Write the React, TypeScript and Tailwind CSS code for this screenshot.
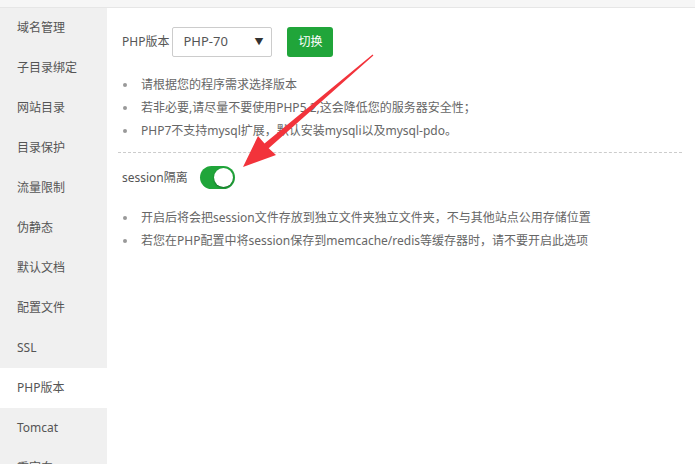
import React from "react";

const menu = [
  "域名管理",
  "子目录绑定",
  "网站目录",
  "目录保护",
  "流量限制",
  "伪静态",
  "默认文档",
  "配置文件",
  "SSL",
  "PHP版本",
  "Tomcat",
  "重定向",
];

const tipsTop = [
  "请根据您的程序需求选择版本",
  "若非必要,请尽量不要使用PHP5.2,这会降低您的服务器安全性；",
  "PHP7不支持mysql扩展，默认安装mysqli以及mysql-pdo。",
];

const tipsSession = [
  "开启后将会把session文件存放到独立文件夹独立文件夹，不与其他站点公用存储位置",
  "若您在PHP配置中将session保存到memcache/redis等缓存器时，请不要开启此选项",
];

const Tip = ({ text }: { text: string }) => (
  <li className="flex h-[23px] items-center">
    <span className="ml-[1px] h-1 w-1 rounded-full bg-[#999]" />
    <span className="ml-[14px] text-[#666]">{text}</span>
  </li>
);

export default function App() {
  return (
    <div
      className="relative h-[464px] w-[695px] overflow-hidden bg-white text-[12px] text-[#555]"
      style={{ fontFamily: '"Noto Sans", "Noto Sans CJK SC", sans-serif' }}
    >
      <div className="h-[8px] border-b border-[#e6e6e6] bg-[#f6f6f6]" />
      <div className="flex">
        <ul className="w-[107px] shrink-0 bg-[#f0f0f0]">
          {menu.map((m) => (
            <li
              key={m}
              className={
                m === "PHP版本"
                  ? "flex h-10 items-center bg-white pl-[17px]"
                  : "flex h-10 items-center pl-[17px]"
              }
            >
              {m}
            </li>
          ))}
        </ul>

        <div className="flex-1 pl-[11px] pr-[13px] pt-[19px]">
          <div className="flex h-[30px] items-center pl-1">
            <span className="text-[#555]">PHP版本</span>
            <div className="ml-[3px] flex h-[30px] w-[100px] items-center justify-between rounded-[2px] border border-[#ccc] pl-[10px] pr-[8px] text-[13px] text-[#555]">
              <span>PHP-70</span>
              <span className="text-[9px] text-[#333]">▼</span>
            </div>
            <button className="ml-[15px] h-[30px] w-[46px] rounded-[3px] bg-[#20a53a] text-white">
              切换
            </button>
          </div>

          <ul className="mt-4 pl-1">
            {tipsTop.map((t) => (
              <Tip key={t} text={t} />
            ))}
          </ul>

          <div className="mt-[10px] border-t border-dashed border-[#ccc]" />

          <div className="mt-[13px] flex h-[23px] items-center pl-1">
            <span>session隔离</span>
            <div className="ml-[12px] flex h-[23px] w-[35px] items-center justify-end rounded-full bg-[#20a53a] pr-[2px]">
              <div className="h-[19px] w-[19px] rounded-full bg-white shadow-[0_1px_2px_rgba(0,0,0,0.35)]" />
            </div>
          </div>

          <ul className="mt-[17px] pl-1">
            {tipsSession.map((t) => (
              <Tip key={t} text={t} />
            ))}
          </ul>
        </div>
      </div>

      {/* red annotation arrow */}
      <svg
        className="pointer-events-none absolute left-0 top-0"
        width="695"
        height="464"
        viewBox="0 0 695 464"
      >
        <polygon
          points="243,167 258,136 264.5,143.5 372.6,54.6 373.4,55.4 268.7,148.3 276,155"
          fill="#f2333b"
        />
      </svg>
    </div>
  );
}
